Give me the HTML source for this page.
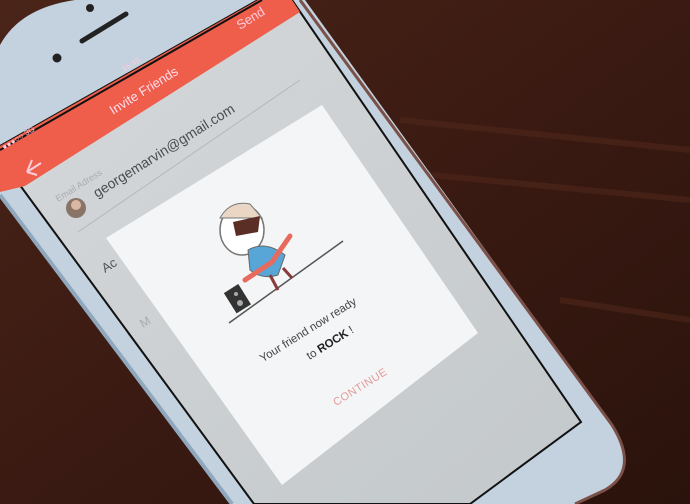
<!DOCTYPE html>
<html><head><meta charset="utf-8"><style>
html,body{margin:0;padding:0;width:690px;height:504px;overflow:hidden;background:#3a1c13}
svg{display:block}
text{font-family:"Liberation Sans",sans-serif}
</style></head><body>
<svg width="690" height="504" viewBox="0 0 690 504" xmlns="http://www.w3.org/2000/svg">
<defs>
<linearGradient id="wood" x1="0" y1="0" x2="1" y2="1">
<stop offset="0" stop-color="#4a2418"/><stop offset="0.5" stop-color="#3a1a12"/><stop offset="1" stop-color="#2a130c"/>
</linearGradient>
<linearGradient id="scr" x1="0" y1="0" x2="1" y2="1">
<stop offset="0" stop-color="#d6d9db"/><stop offset="1" stop-color="#c3c8cb"/>
</linearGradient>
</defs>
<rect width="690" height="504" fill="url(#wood)"/>
<path d="M400 120 L690 150 M380 170 L690 200 M560 300 L690 320" stroke="#55291b" stroke-width="6" opacity="0.5"/>
<!-- phone body -->
<path d="M0 45 Q20 8 75 0 L305 0 L612 425 Q640 470 605 490 L575 504 L232 504 L0 195 Z" fill="#c3d2de"/>
<path d="M300 0 L612 425 Q640 470 605 490 L575 504" fill="none" stroke="#7a5048" stroke-width="3"/>
<path d="M0 195 L232 504" stroke="#8fa8bd" stroke-width="4"/>
<!-- earpiece & cams -->
<path d="M82 41 L126 14" stroke="#222" stroke-width="5" stroke-linecap="round"/>
<circle cx="90" cy="8" r="4" fill="#222"/>
<circle cx="57" cy="58" r="4.5" fill="#222"/>
<!-- screen -->
<path d="M0 146 L258 0 L292 0 L581 422 L470 504 L254 504 L0 158 Z" fill="url(#scr)" stroke="#111" stroke-width="2"/>
<!-- header -->
<path d="M0 146 L258 0 L292 0 L300 12 L25 186 L0 192 Z" fill="#ee5e4b"/>
<path d="M0 150 L262 0" stroke="#111" stroke-width="2"/>
<text transform="translate(113,115) rotate(-32)" font-size="13" fill="#fde">Invite Friends</text>
<text transform="translate(240,30) rotate(-32)" font-size="13" fill="#fcd">Send</text>
<text transform="translate(124,72) rotate(-32)" font-size="8" fill="#fcd">15:48</text>
<text transform="translate(4,150) rotate(-32)" font-size="8" fill="#fcd">●●●○○ 3G</text>
<path d="M27 172 L41 163 M27 172 L32 160 M27 172 L37 175" stroke="#fcd" stroke-width="2" fill="none"/>
<!-- fields -->
<text transform="translate(58,202) rotate(-32)" font-size="9" fill="#a8acae">Email Adress</text>
<text transform="translate(97,198) rotate(-32)" font-size="14" fill="#4a4d50">georgemarvin@gmail.com</text>
<circle cx="76" cy="208" r="10" fill="#8a7468"/>
<circle cx="76" cy="205" r="5" fill="#d9b9a3"/>
<path d="M78 232 L300 80" stroke="#b4b8ba" stroke-width="1"/>
<text transform="translate(105,273) rotate(-32)" font-size="13" fill="#555">Ac</text>
<text transform="translate(143,328) rotate(-32)" font-size="12" fill="#aaa">M</text>
<!-- card -->
<path d="M106 238 L322 105 L478 333 L282 485 Z" fill="#f3f5f6"/>
<!-- illustration -->
<path d="M229 323 L343 241" stroke="#555" stroke-width="1.5"/>
<rect x="229" y="287" width="17" height="24" fill="#333" transform="rotate(-32 237 299)"/>
<circle cx="240" cy="303" r="3" fill="#aaa"/>
<circle cx="236" cy="294" r="2" fill="#aaa"/>
<ellipse cx="242" cy="230" rx="22" ry="25" fill="#fff" stroke="#777" stroke-width="1.5"/>
<path d="M220 218 Q230 200 250 204 L262 218 Z" fill="#e9d6c4" stroke="#777"/>
<path d="M233 222 L260 216 L258 232 L236 236 Z" fill="#5a2e24"/>
<path d="M248 250 Q265 240 285 255 L278 275 Q262 280 250 270 Z" fill="#58a6d8" stroke="#666"/>
<path d="M245 280 L272 262 L290 236" stroke="#e86a5e" stroke-width="5" fill="none" stroke-linecap="round"/>
<path d="M270 275 L278 290 M283 268 L292 278" stroke="#8a3a3a" stroke-width="3"/>
<!-- text -->
<text transform="translate(310,333) rotate(-32)" font-size="11.5" fill="#444" text-anchor="middle">Your friend now ready</text>
<text transform="translate(332,346) rotate(-32)" font-size="11.5" fill="#444" text-anchor="middle">to <tspan font-weight="bold" fill="#222">ROCK</tspan> !</text>
<text transform="translate(362,390) rotate(-32)" font-size="11" fill="#e49a9a" text-anchor="middle" letter-spacing="0.5">CONTINUE</text>
</svg>
</body></html>
